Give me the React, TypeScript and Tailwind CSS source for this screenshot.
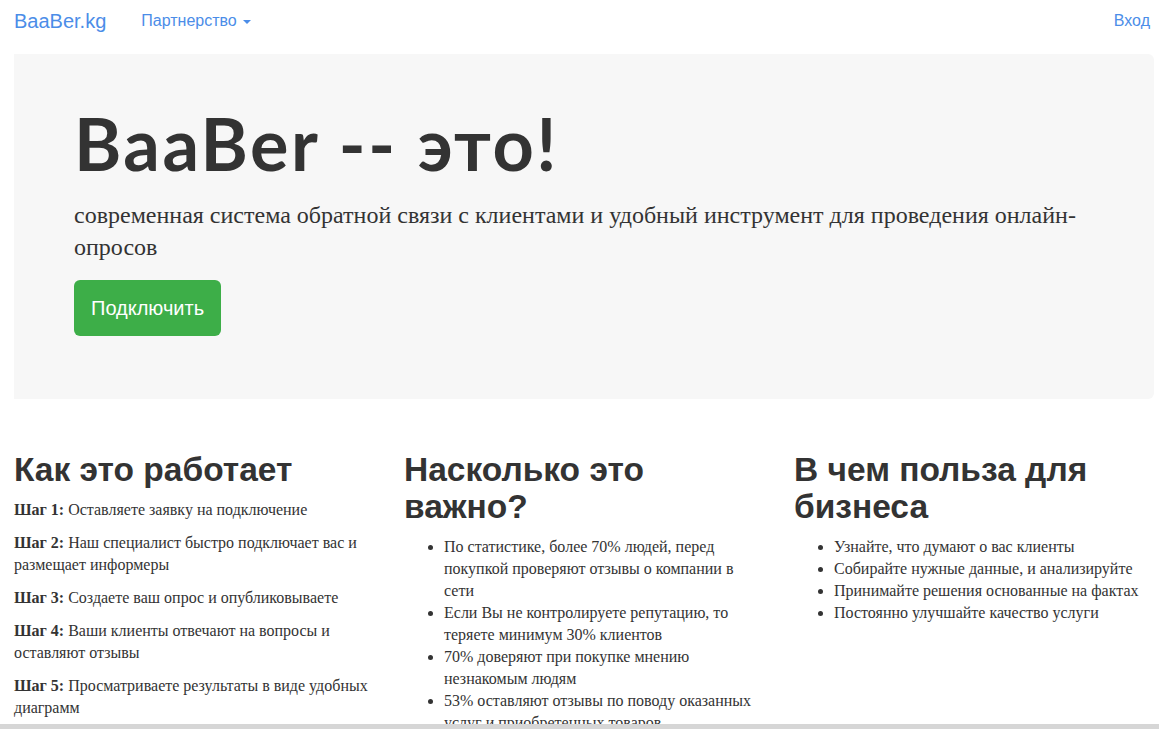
import React from "react";

const steps = [
  { label: "Шаг 1:", text: "Оставляете заявку на подключение" },
  { label: "Шаг 2:", text: "Наш специалист быстро подключает вас и размещает информеры" },
  { label: "Шаг 3:", text: "Создаете ваш опрос и опубликовываете" },
  { label: "Шаг 4:", text: "Ваши клиенты отвечают на вопросы и оставляют отзывы" },
  { label: "Шаг 5:", text: "Просматриваете результаты в виде удобных диаграмм" },
];

const facts = [
  "По статистике, более 70% людей, перед покупкой проверяют отзывы о компании в сети",
  "Если Вы не контролируете репутацию, то теряете минимум 30% клиентов",
  "70% доверяют при покупке мнению незнакомым людям",
  "53% оставляют отзывы по поводу оказанных услуг и приобретенных товаров",
];

const benefits = [
  "Узнайте, что думают о вас клиенты",
  "Собирайте нужные данные, и анализируйте",
  "Принимайте решения основанные на фактах",
  "Постоянно улучшайте качество услуги",
];

const sans = "font-['Liberation_Sans',Arial,sans-serif]";
const serif = "font-['Liberation_Serif','Times_New_Roman',serif]";

const App: React.FC = () => {
  return (
    <div className="min-h-screen bg-white text-[#333]">
      {/* navbar */}
      <nav className={`flex items-center h-[41px] pl-[14px] pr-[9px] ${sans}`}>
        <a className="text-[20px] text-[#4b8de8] mr-[35px]" href="#">
          BaaBer.kg
        </a>
        <a className="flex items-center text-[16px] text-[#4b8de8]" href="#">
          Партнерство
          <span className="ml-[6px] mt-[2px] border-x-[4px] border-x-transparent border-t-[4px] border-t-[#4b8de8]" />
        </a>
        <a className="ml-auto text-[16px] text-[#4b8de8]" href="#">
          Вход
        </a>
      </nav>

      {/* jumbotron */}
      <div className="mt-[13px] ml-[14px] mr-[5px] bg-[#f7f7f7] rounded-r-md pl-[60px] pr-[60px] pt-[50px] pb-[63px]">
        <h1 className="font-['Lato',sans-serif] font-bold text-[72px] leading-[1.1] tracking-[2.5px] text-[#333]">
          BaaBer -- это!
        </h1>
        <p className={`${serif} text-[24px] leading-[32px] mt-[16px] text-[#333]`}>
          современная система обратной связи с клиентами и удобный инструмент для проведения онлайн-опросов
        </p>
        <button
          className={`${sans} mt-[17px] bg-[#3dae48] text-white text-[20px] rounded-md px-[17px] h-[56px]`}
        >
          Подключить
        </button>
      </div>

      {/* columns */}
      <div className="grid grid-cols-[390px_390px_1fr] pl-[14px] mt-[52px]">
        <div className="pr-[30px]">
          <h2 className={`${sans} font-bold text-[33.5px] leading-[37px] mb-[11px]`}>Как это работает</h2>
          {steps.map((s) => (
            <p key={s.label} className={`${serif} text-[16px] leading-[22px] mb-[11px]`}>
              <b>{s.label}</b> {s.text}
            </p>
          ))}
        </div>
        <div className="pr-[30px]">
          <h2 className={`${sans} font-bold text-[33.5px] leading-[37px] mb-[11px]`}>Насколько это важно?</h2>
          <ul className={`${serif} list-disc pl-[40px] text-[16px] leading-[22px]`}>
            {facts.map((f) => (
              <li key={f}>{f}</li>
            ))}
          </ul>
        </div>
        <div className="pr-[10px]">
          <h2 className={`${sans} font-bold text-[33.5px] leading-[37px] mb-[11px]`}>В чем польза для бизнеса</h2>
          <ul className={`${serif} list-disc pl-[40px] text-[16px] leading-[22px]`}>
            {benefits.map((f) => (
              <li key={f}>{f}</li>
            ))}
          </ul>
        </div>
      </div>

      {/* horizontal scrollbar strip */}
      <div className="fixed left-0 right-0 bottom-0 h-[5px] bg-[#d6d6d6]" />
    </div>
  );
};

export default App;
